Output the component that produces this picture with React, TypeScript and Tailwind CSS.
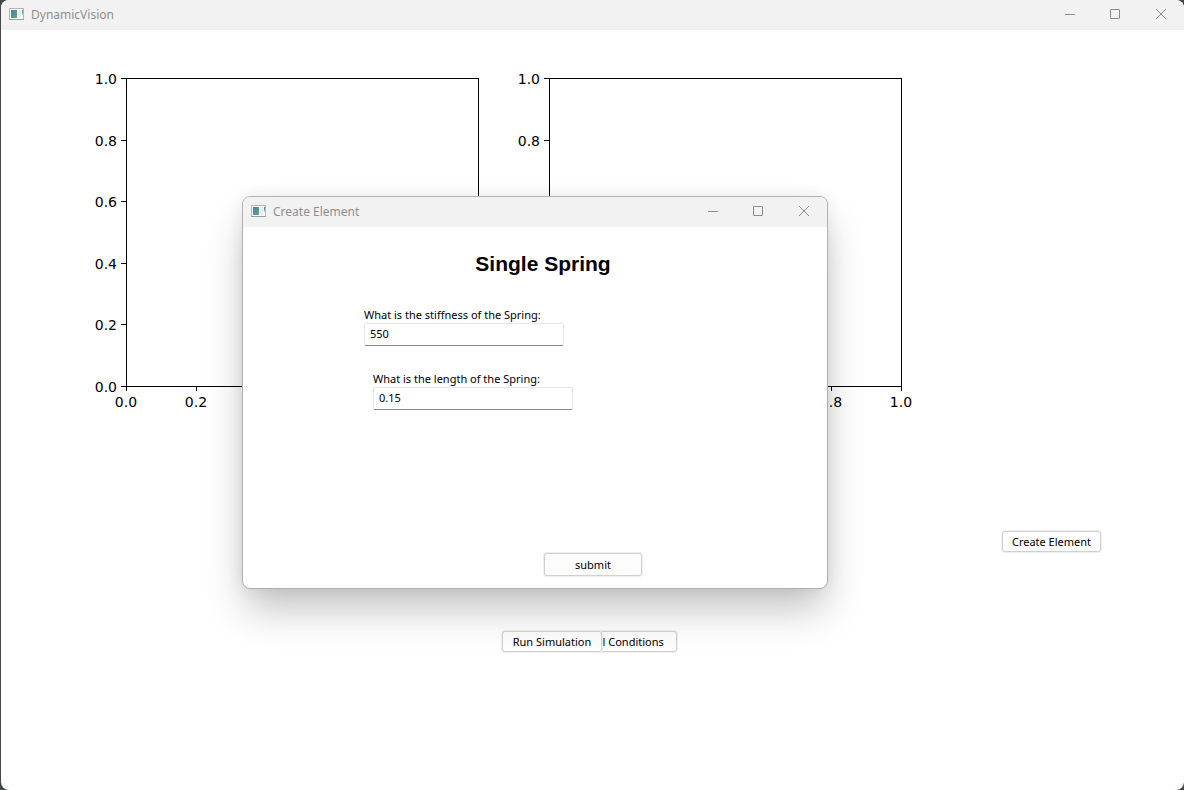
import type { ReactNode } from "react";

const TICKS = [0, 0.2, 0.4, 0.6, 0.8, 1];
const PLOT = { left: 46, top: 18, width: 352, height: 308 };

function AppIcon() {
  return (
    <svg width="15" height="14" viewBox="0 0 15 14" aria-hidden="true" shapeRendering="crispEdges">
      <defs>
        <linearGradient id="pane" x1="0" y1="0" x2="1" y2="1">
          <stop offset="0" stopColor="#4d7fa6" />
          <stop offset="1" stopColor="#5fa585" />
        </linearGradient>
      </defs>
      <rect x="0.5" y="0.5" width="14" height="11" fill="#fafafa" stroke="#b4b8bc" />
      <path d="M0 11.5H15" stroke="#989da3" />
      <rect x="2" y="2" width="6" height="8" fill="url(#pane)" />
      <rect x="9" y="2" width="3" height="8" fill="#ececec" />
      <rect x="13" y="2" width="1" height="3" fill="#5b93a3" />
      <rect x="13" y="5" width="1" height="2" fill="#a5cdb9" />
    </svg>
  );
}

function CaptionButton({ label, children }: { label: string; children: ReactNode }) {
  return (
    <button type="button" aria-label={label} className="flex h-full w-[46px] items-center justify-center">
      <svg width="12" height="12" viewBox="0 0 12 12" fill="none" stroke="#8c8c8c" aria-hidden="true">
        {children}
      </svg>
    </button>
  );
}

function TitleBar({ title }: { title: string }) {
  return (
    <header className="flex h-[30px] items-center bg-[#f2f2f2] pl-2 text-[#8f8f8f]">
      <AppIcon />
      <span className="ml-[7px] flex-1 text-[12px] leading-4">{title}</span>
      <CaptionButton label="Minimize">
        <path d="M2 5.5H12" />
      </CaptionButton>
      <CaptionButton label="Maximize">
        <rect x="1.5" y="0.5" width="9" height="9" rx="0.5" />
      </CaptionButton>
      <CaptionButton label="Close">
        <path d="M1 0L11 10M11 0L1 10" />
      </CaptionButton>
    </header>
  );
}

function Axes({ label }: { label: string }) {
  const bottom = PLOT.top + PLOT.height;
  return (
    <svg
      width="423"
      height="360"
      viewBox="0 0 423 360"
      role="img"
      aria-label={label}
      className="shrink-0 font-['DejaVu_Sans',sans-serif] text-[14px]"
    >
      <rect x={PLOT.left + 0.5} y={PLOT.top + 0.5} width={PLOT.width} height={PLOT.height} fill="none" stroke="#000" />
      {TICKS.map((t) => {
        const x = Math.round(PLOT.left + t * PLOT.width);
        const y = Math.round(bottom - t * PLOT.height);
        return (
          <g key={t}>
            <path d={`M${x + 0.5} ${bottom}v5M${PLOT.left - 5} ${y + 0.5}h5`} stroke="#000" />
            <text x={x} y={bottom + 21} textAnchor="middle">
              {t.toFixed(1)}
            </text>
            <text x={PLOT.left - 9} y={y + 6} textAnchor="end">
              {t.toFixed(1)}
            </text>
          </g>
        );
      })}
    </svg>
  );
}

const BUTTON =
  "flex items-center justify-center rounded-[3px] border border-[#d0d0d0] bg-[#fdfdfd] text-[11px] leading-4 whitespace-nowrap text-black shadow-[0_0_0_1px_#f0f0f0]";

function Field({ id, label, value }: { id: string; label: string; value: string }) {
  return (
    <div className="flex flex-col">
      <label htmlFor={id} className="text-[11px] leading-4 whitespace-nowrap">
        {label}
      </label>
      <input
        id={id}
        defaultValue={value}
        className="h-[23px] w-[200px] rounded-xs border border-[#e8e8e8] border-b-[#868686] bg-white px-[5px] pb-0.5 text-[11px] leading-4 outline-none"
      />
    </div>
  );
}

function CreateElementDialog() {
  return (
    <section
      role="dialog"
      aria-label="Create Element"
      className="absolute top-[196px] left-[242px] z-20 w-[586px] overflow-hidden rounded-lg border border-[#b0b0b0] bg-white shadow-[0_24px_40px_-4px_rgba(0,0,0,0.24),0_0_16px_rgba(0,0,0,0.08)]"
    >
      <TitleBar title="Create Element" />
      <form className="flex flex-col pb-3" onSubmit={(e) => e.preventDefault()}>
        <h1 className="mt-[23px] pl-4 text-center font-['Liberation_Sans',Arial,sans-serif] text-[21px] leading-7 font-bold">
          Single Spring
        </h1>
        <div className="mt-[29px] flex flex-col gap-[25px] pl-[121px]">
          <Field id="stiffness" label="What is the stiffness of the Spring:" value="550" />
          <div className="pl-[9px]">
            <Field id="length" label="What is the length of the Spring:" value="0.15" />
          </div>
        </div>
        <button type="submit" className={`${BUTTON} mt-[143px] ml-[301px] h-[23px] w-[98px]`}>
          submit
        </button>
      </form>
    </section>
  );
}

export default function App() {
  return (
    <div className="relative min-h-screen bg-[#444846] pl-px font-['Noto_Sans','Open_Sans',sans-serif]">
      <div className="min-h-screen overflow-hidden rounded-lg bg-white">
        <TitleBar title="DynamicVision" />
        <main>
          <div className="flex pt-[30px] pl-[79px]">
            <Axes label="Left plot" />
            <Axes label="Right plot" />
          </div>
          <div className="mt-[111px] flex justify-end pr-[83px]">
            <button type="button" className={`${BUTTON} h-[21px] w-[99px]`}>
              Create Element
            </button>
          </div>
          <div className="mt-[79px] flex justify-center pr-1.5">
            <button type="button" className={`${BUTTON} z-10 h-[21px] w-[100px]`}>
              Run Simulation
            </button>
            <button type="button" className={`${BUTTON} -ml-[39px] h-[21px] w-[114px]`}>
              Initial Conditions
            </button>
          </div>
        </main>
      </div>
      <CreateElementDialog />
    </div>
  );
}
